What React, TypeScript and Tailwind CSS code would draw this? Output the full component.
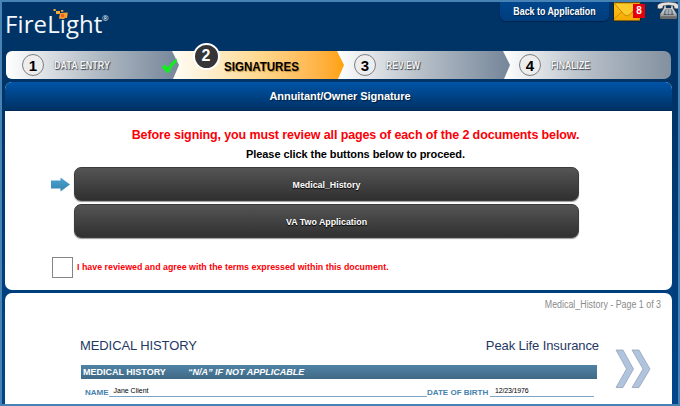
import React from "react";

function Logo() {
  return (
    <div className="relative h-[51px] w-[110px] text-[#f4f8fc]">
      <span className="absolute left-[5px] top-[8px] whitespace-nowrap font-['Open_Sans'] text-[24px] leading-[32px] tracking-[0.1px]">
        FireLight
      </span>
      <span className="absolute left-[102px] top-[13px] font-['Open_Sans'] text-[8px] leading-[10px]">®</span>
      <svg className="absolute left-[52px] top-[8px]" width="17" height="13" viewBox="0 0 17 13">
        <path fill="#f9a83a" d="M1.500 1h2.200v2H1.500zM4 3h4v3H4zM9 2h2.300v1.800H9z" />
        <path fill="#f9a22d" d="M8.500 5L15.800 4.500 15 10 13 9.800 12.500 10.800H7L7.500 7.500z" />
        <path fill="#f15a24" d="M9 6.200h3.200v3H9z" />
      </svg>
    </div>
  );
}

function Envelope() {
  return (
    <div className="relative mt-[2px] h-[20px] w-[34px]">
      <svg width="28" height="20" viewBox="0 0 28 20">
        <defs>
          <linearGradient id="mail" x1="0" y1="0" x2="0" y2="1">
            <stop offset="0" stopColor="#ffc51c" />
            <stop offset="1" stopColor="#f5a900" />
          </linearGradient>
        </defs>
        <rect x="0.5" y="0.5" width="27" height="18.5" rx="1" fill="url(#mail)" stroke="#17202b" />
        <path d="M1 17L10 9M18 9L27 18" stroke="#d68f00" fill="none" />
        <path d="M1 1L11 12.5Q14 15.5 17 12.5L27 1z" fill="#ffca2b" stroke="#c98500" />
      </svg>
      <span className="absolute left-[20px] top-[2px] h-[14px] w-[12px] bg-[#e5000b] text-center text-[10px] font-bold leading-[14px] text-white">
        8
      </span>
    </div>
  );
}

function Phone() {
  return (
    <svg className="mt-px" width="22" height="20" viewBox="0 0 22 20">
      <defs>
        <linearGradient id="tel" x1="0" y1="0" x2="0" y2="1">
          <stop offset="0" stopColor="#f4f4f4" />
          <stop offset="0.6" stopColor="#b5b5b5" />
          <stop offset="1" stopColor="#777" />
        </linearGradient>
      </defs>
      <path d="M7 4h2v3h5V4h2v3l4 6v4q0 1-1 1H4q-1 0-1-1v-4l4-6z" fill="url(#tel)" stroke="#30363f" strokeWidth="0.5" />
      <path d="M0.5 7.5V4Q3 1 11.500 1T21.500 4V7.500Q19 8.500 17 7V5Q12 3.500 6 5V7Q3 8.500 0.500 7.500z" fill="#e2e2e2" stroke="#333" strokeWidth="0.6" />
      <path d="M8 8.500h7l1.500 5.500H6.500z" fill="#4a5664" />
      <path d="M8 10h7M7.500 12h8M10 8.500v5M13 8.500v5" stroke="#d8dde2" strokeWidth="0.800" />
      <path d="M3.500 16h16" stroke="#555" />
    </svg>
  );
}

const STEP_TEXT =
  "relative top-px origin-left whitespace-nowrap text-[10px] font-bold leading-[14px] text-[#f4f6f8] [text-shadow:1px_1px_1px_#3e4650,0_0_1px_#5b6570]";

function Circle({ n }: { n: string }) {
  return (
    <span className="relative flex h-[22px] w-[22px] shrink-0 items-center justify-center rounded-full border-[1.500px] border-[#7e7e80] bg-[#ededed] text-[15px] font-bold leading-[15px] text-black">
      {n}
    </span>
  );
}

const ARROW = "[clip-path:polygon(0_0,calc(100%_-_7px)_0,100%_50%,calc(100%_-_6px)_100%,0_100%)]";

function Steps() {
  return (
    <div className="ml-[6px] flex h-[28px] w-[665px]">
      <div className="relative z-40 flex w-[173px] items-center pl-[16px]">
        <span className={`absolute inset-0 rounded-l-[6px] bg-linear-to-r from-white via-[#bcc4cc] via-45% to-[#758699] ${ARROW}`} />
        <Circle n="1" />
        <span className={`${STEP_TEXT} ml-[10px] scale-x-[0.9]`}>DATA ENTRY</span>
        <svg className="absolute left-[155px] top-[7px]" width="17" height="16" viewBox="0 0 17 16">
          <path d="M0.500 9L4 6.500 7 9.500Q10 4 15.500 0.500L16 3.500Q11 8 8 14.500L6 15z" fill="#12ec20" />
        </svg>
      </div>
      <div className="relative z-30 -ml-[7px] flex w-[172px] items-center">
        <span className={`absolute inset-0 bg-linear-to-r from-[#fffdf8] via-[#ffd98f] via-50% to-[#ffa200] ${ARROW}`} />
        <span className="relative -top-[9px] ml-[20.500px] flex h-[27px] w-[27px] shrink-0 items-center justify-center rounded-full border-2 border-white bg-[#353537] text-[16px] font-bold leading-[16px] text-white">
          2
        </span>
        <span className="relative ml-[4px] mt-[3px] origin-left scale-x-[0.962] whitespace-nowrap text-[12px] font-bold leading-[14px] text-black [text-shadow:1px_1px_1px_#b78b3d]">
          SIGNATURES
        </span>
      </div>
      <div className="relative z-20 -ml-[7px] flex w-[173px] items-center pl-[17px]">
        <span className={`absolute inset-0 bg-linear-to-r from-white via-[#bcc4cc] via-45% to-[#758699] ${ARROW}`} />
        <Circle n="3" />
        <span className={`${STEP_TEXT} ml-[9.500px] scale-x-[0.86]`}>REVIEW</span>
      </div>
      <div className="relative z-10 -ml-[7px] flex w-[168px] items-center rounded-r-[7px] bg-linear-to-r from-white via-[#bcc4cc] via-45% to-[#82909f] pl-[16px]">
        <Circle n="4" />
        <span className={`${STEP_TEXT} ml-[10px] scale-x-[0.87]`}>FINALIZE</span>
      </div>
    </div>
  );
}

function DocButton({ label }: { label: string }) {
  return (
    <button className="flex h-[34px] w-[505px] items-center justify-center rounded-[7px] border border-[#3c3c3c] bg-linear-to-b from-[#555] to-[#303030] pt-[2px] text-[9.500px] font-bold text-white shadow-[0_1px_1px_#999] [text-shadow:0_1px_1px_#000]">
      <span className="scale-x-[0.93]">{label}</span>
    </button>
  );
}

export default function App() {
  return (
    <div className="h-[406px] w-[680px] overflow-hidden border-2 border-[#4682b4] bg-linear-to-b from-[#003366] from-20% to-[#00468c] font-['Liberation_Sans',Arial,sans-serif]">
      <div className="-ml-[2px] -mt-[2px] w-[680px]">
        <header className="flex h-[51px] items-start justify-between">
          <Logo />
          <div className="flex items-start">
            <button className="mt-[2px] flex h-[19px] w-[109px] items-center justify-center whitespace-nowrap rounded-b-[6px] bg-linear-to-b from-[#00468c] to-[#003d7d] text-[10px] font-bold leading-[19px] text-white shadow-[0_1px_1px_#00234a] [text-shadow:1px_1px_1px_#001f44]">
              <span className="scale-x-[0.885]">Back to Application</span>
            </button>
            <div className="ml-[4px]"><Envelope /></div>
            <div className="ml-[10px] mr-px"><Phone /></div>
          </div>
        </header>
        <Steps />
        <section className="ml-[5px] mt-[3px] h-[208px] w-[667px] overflow-hidden rounded-[7px] bg-white">
          <h1 className="flex h-[29px] items-center justify-center border-b border-[#002b59] bg-linear-to-b from-[#0054a8] to-[#003265] pt-px text-[11px] font-bold tracking-[-0.050px] text-white [text-shadow:1px_1px_1px_#001f44]">
            <span className="ml-[3px]">Annuitant/Owner Signature</span>
          </h1>
          <p className="mt-[16px] pl-[34px] text-center text-[12.500px] font-bold leading-[17px] tracking-[-0.120px] text-[#fb0007]">
            Before signing, you must review all pages of each of the 2 documents below.
          </p>
          <p className="mt-[2px] pl-[34px] text-center text-[11px] font-bold leading-[17px] tracking-[-0.070px] text-black">
            Please click the buttons below to proceed.
          </p>
          <div className="mt-[4px] flex pl-[46px]">
            <svg className="mr-[4px] mt-[10px]" width="19" height="16" viewBox="0 0 19 16">
              <defs>
                <linearGradient id="arr" x1="0" y1="0" x2="0" y2="1">
                  <stop offset="0" stopColor="#4ba3d4" />
                  <stop offset="1" stopColor="#3484ac" />
                </linearGradient>
              </defs>
              <path d="M0 3.500H9.500V0.500L19 7.500 9.500 14.500V11.500H0z" fill="url(#arr)" />
            </svg>
            <div className="flex flex-col gap-[3px]">
              <DocButton label="Medical_History" />
              <DocButton label="VA Two Application" />
            </div>
          </div>
          <label className="mt-[19px] flex items-center pl-[47px] text-[9.500px] font-bold text-[#fb0007]">
            <span className="mr-[4px] h-[21px] w-[21px] border border-[#858585] bg-white" />
            <span className="origin-left scale-x-[0.931] whitespace-nowrap">I have reviewed and agree with the terms expressed within this document.</span>
          </label>
        </section>
        <section className="ml-[5px] mt-[3px] h-[112px] w-[667px] rounded-t-[7px] bg-white">
          <p className="origin-right -translate-x-[11px] scale-x-[0.886] pt-[5px] text-right text-[10px] leading-[14px] text-[#8a8a8a]">Medical_History - Page 1 of 3</p>
          <div className="flex pl-[76px]">
            <div className="w-[516px] shrink-0">
              <div className="mt-[25px] flex h-[17px] items-center justify-between text-[13px] leading-[17px] tracking-[-0.090px] text-[#1f3864]">
                <h2 className="-ml-px">MEDICAL HISTORY</h2>
                <h2 className="-mr-[2px]">Peak Life Insurance</h2>
              </div>
              <div className="mt-[11px] flex h-[14px] items-center bg-linear-to-b from-[#4f82a6] to-[#406a86] pl-[2px] text-[9px] font-bold leading-[14px] text-white">
                <span className="w-[105px] whitespace-nowrap">MEDICAL HISTORY</span>
                <span className="whitespace-nowrap italic">“N/A” IF NOT APPLICABLE</span>
              </div>
              <div className="mt-[7px] flex h-[13px] items-start pl-[4px] pr-[3px] text-[8px] font-bold leading-[13px] text-[#4682ac]">
                <span className="w-[23.500px] whitespace-nowrap">NAME</span>
                <span className="h-[11px] flex-1 border-b border-[#7ba5c2] pl-[5px] text-[7px] font-normal leading-[9px] text-black">Jane Client</span>
                <span className="w-[63px] whitespace-nowrap">DATE OF BIRTH</span>
                <span className="h-[11px] w-[104px] border-b border-[#7ba5c2] pl-[5px] text-[7px] font-normal leading-[9px] tracking-[-0.150px] text-black">12/23/1976</span>
              </div>
            </div>
            <svg className="ml-[18px] mt-[37px] shrink-0" width="37" height="40" viewBox="0 0 37 40">
              <g fill="#b0c4de" stroke="#8c9bb0" strokeWidth="0.700">
                <path d="M1 1H8L18.500 20 8 38.500H1L11.500 20z" />
                <path d="M17 1H24L35 20 24 38.500H17L28 20z" />
              </g>
            </svg>
          </div>
        </section>
      </div>
      <div className="fixed inset-x-0 bottom-0 h-[2px] bg-[#4682b4]" />
    </div>
  );
}
